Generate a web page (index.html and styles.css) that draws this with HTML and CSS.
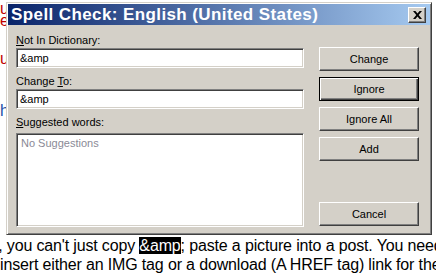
FILE: index.html
```html
<!DOCTYPE html>
<html lang="en">
<head>
  <meta charset="UTF-8" />
  <title>Spell Check</title>
  <link rel="stylesheet" href="styles.css">
</head>
<body>

<div class="page">
  <div class="edge">
    <span class="frag red f1">u</span>
    <span class="frag red f2">e:</span>
    <span class="frag red f3">u</span>
    <span class="frag blue f4">h</span>
  </div>
  <p class="behind">
    <span class="l1">&gt;, you can't just copy <mark>&amp;amp</mark>; paste a picture into a post. You need</span>
    <span class="l2">insert either an IMG tag or a download (A HREF tag) link for the</span>
  </p>
</div>

<div class="dialog">
  <div class="titlebar">
    <span class="title">Spell Check: English (United States)</span>
    <button class="close" type="button">
      <svg width="9" height="8" viewBox="0 0 9 8"><path d="M0 0h2.4l2.1 2.6L6.6 0H9L5.7 4 9 8H6.6L4.5 5.4 2.4 8H0l3.3-4z" fill="#000"/></svg>
    </button>
  </div>

  <div class="content">
    <div class="fields">
      <label class="lbl l-first"><u>N</u>ot In Dictionary:</label>
      <div class="field">&amp;amp</div>

      <label class="lbl">Change <u>T</u>o:</label>
      <div class="field">&amp;amp</div>

      <label class="lbl"><u>S</u>uggested words:</label>
      <div class="list">No Suggestions</div>
    </div>

    <div class="actions">
      <button class="btn" type="button">Change</button>
      <button class="btn default" type="button">Ignore</button>
      <button class="btn" type="button">Ignore All</button>
      <button class="btn" type="button">Add</button>
      <button class="btn cancel" type="button">Cancel</button>
    </div>
  </div>
</div>

</body>
</html>
```

FILE: styles.css
```css
body {
  margin: 0;
  width: 436px;
  height: 276px;
  overflow: hidden;
  position: relative;
  background: #fff;
  font-family: "Liberation Sans", Arial, sans-serif;
}
.page {
  font-size: 16px;
  line-height: 19px;
  color: #000;
}
.edge {
  display: flow-root;
  height: 236px;
}
.frag {
  display: block;
  white-space: nowrap;
  height: 12px;
  line-height: 12px;
}
.red { color: #c00000; }
.blue { color: #1f4fa8; }
.f1 { margin-top: 3px; }
.f2 { margin-top: 0; }
.f3 { margin-top: 26px; }
.f4 { margin-top: 40px; }
.behind {
  margin: 0;
  white-space: nowrap;
  letter-spacing: -0.15px;
}
.behind span {
  display: block;
}
.l1 {
  margin-left: -11px;
}
mark {
  background: #000;
  color: #fff;
}

.dialog {
  position: absolute;
  left: 6px;
  top: 2px;
  width: 426px;
  background: #d4d0c8;
  border: 1px solid;
  border-color: #d4d0c8 #404040 #404040 #d4d0c8;
  box-shadow: inset 1px 1px #fff, inset -1px -1px #808080;
  padding: 1px 1px 7px 1px;
  box-sizing: border-box;
  font-size: 11px;
  line-height: 13px;
}
.titlebar {
  height: 21px;
  display: flex;
  align-items: center;
  justify-content: space-between;
  background: linear-gradient(to right, #0a246a, #a6caf0);
  padding: 0 4px 0 3px;
}
.title {
  color: #fff;
  font-weight: bold;
  font-size: 17px;
  letter-spacing: 0.4px;
  white-space: nowrap;
}
.close {
  width: 18px;
  height: 16px;
  padding: 0;
  display: flex;
  align-items: center;
  justify-content: center;
  background: #d4d0c8;
  border: 1px solid;
  border-color: #fff #404040 #404040 #fff;
  box-shadow: inset -1px -1px #808080;
}
.content {
  display: flex;
  gap: 15px;
  padding: 9px 11px 0 8px;
}
.fields {
  width: 288px;
  display: flex;
  flex-direction: column;
}
.lbl {
  display: block;
  margin: 7px 0 1px;
  color: #000;
}
.l-first {
  margin-top: 0;
}
.field, .list {
  background: #fff;
  border: 1px solid;
  border-color: #808080 #fff #fff #808080;
  box-shadow: inset 1px 1px #404040, inset -1px -1px #d4d0c8;
  box-sizing: border-box;
}
.field {
  height: 20px;
  padding: 3px 3px 0;
}
.list {
  height: 94px;
  margin-top: 3px;
  padding: 3px 4px;
  color: #8a8a96;
}
.actions {
  width: 100px;
  display: flex;
  flex-direction: column;
  gap: 6px;
  padding: 13px 0 1px;
}
.btn {
  height: 24px;
  padding: 0;
  font-family: inherit;
  font-size: 11px;
  color: #000;
  background: #d4d0c8;
  border: 1px solid;
  border-color: #fff #404040 #404040 #fff;
  box-shadow: inset -1px -1px #808080;
}
.default {
  border: 1px solid #000;
  box-shadow: inset 1px 1px #fff, inset -1px -1px #404040, inset -2px -2px #808080;
}
.cancel {
  margin-top: auto;
}
```
